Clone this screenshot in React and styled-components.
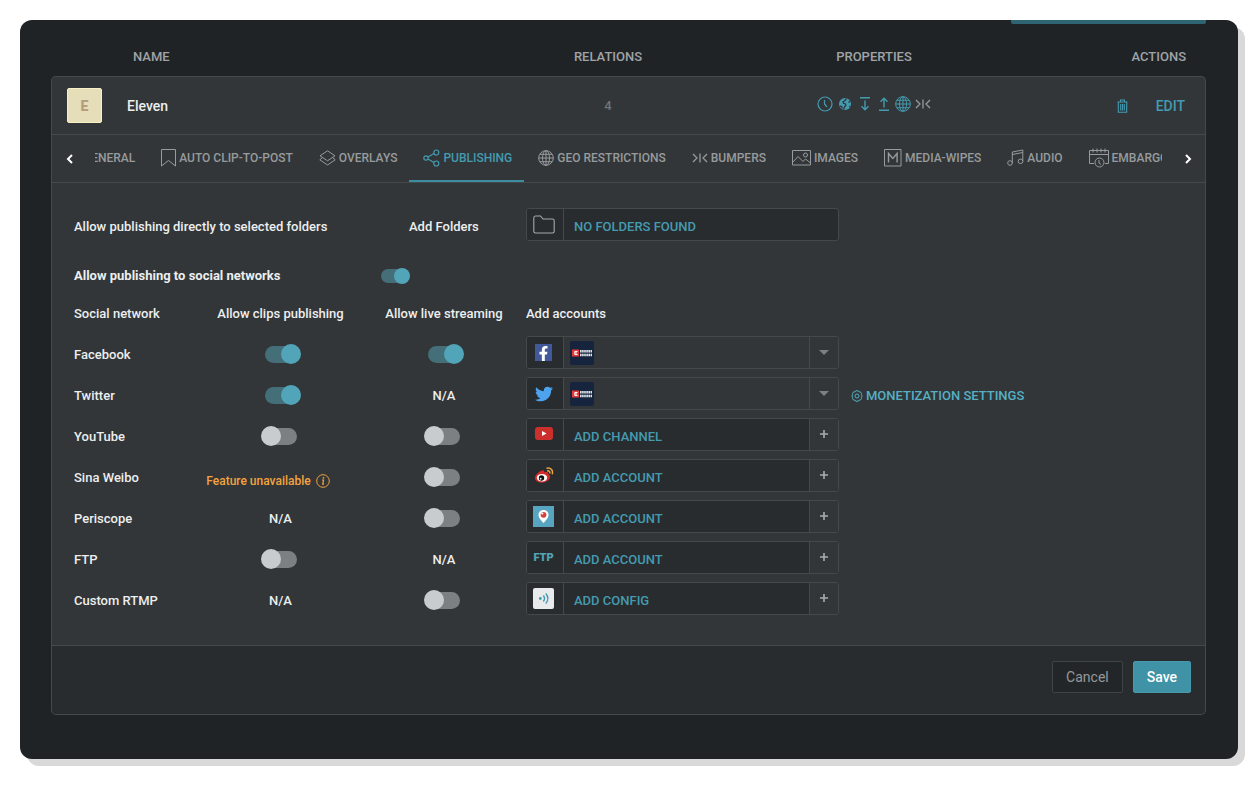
import { useState } from "react";
import styled, { createGlobalStyle } from "styled-components";
import { FaTwitter, FaFacebookF } from "react-icons/fa";

const GlobalStyle = createGlobalStyle`
	* {
		box-sizing: border-box;
	}
	body {
		margin: 0;
		background-color: #fff;
		color: #eceeef;
		font-family: Roboto, "Liberation Sans", sans-serif;
		font-size: 13px;
		font-weight: 500;
		line-height: 16px;
	}
	button {
		font: inherit;
		color: inherit;
		background: none;
		border: none;
		padding: 0;
		cursor: pointer;
	}
	svg {
		display: block;
		flex-shrink: 0;
	}
`;

const Window = styled.main`
	margin: 20px 22px 20px 20px;
	padding: 0 32px 44px 31px;
	background-color: #1f2326;
	border-radius: 12px;
	box-shadow: 7px 7px 0 #d9d9d9;
`;

const TopStrip = styled.div`
	width: 195px;
	height: 4px;
	margin-left: auto;
	background-color: #2f6472;
	border-radius: 0 0 2px 2px;
`;

const ChannelTable = styled.table`
	display: block;

	thead,
	tbody {
		display: block;
	}
	tr {
		display: grid;
		grid-template-columns: 424fr 266fr 266fr 199fr;
		align-items: center;
	}
	th,
	td {
		padding: 0;
		text-align: center;
	}
	th {
		color: #a0a4a6;
		font-weight: 500;
	}
	th:first-child {
		padding-left: 82px;
		text-align: left;
	}
	th:last-child {
		padding-right: 20px;
		text-align: right;
	}
`;

const HeadRow = styled.tr`
	height: 52px;
	padding-top: 14px;
`;

const ChannelRow = styled.tr`
	height: 58px;
	background-color: #323638;
	border: 1px solid #46494c;
	border-bottom: none;
	border-radius: 5px 5px 0 0;
`;

const Name = styled.div`
	display: flex;
	align-items: center;
	gap: 25px;
	padding-left: 15px;
	font-size: 14px;
`;

const Avatar = styled.span`
	display: flex;
	align-items: center;
	justify-content: center;
	width: 35px;
	height: 35px;
	background-color: #e6deb8;
	border: 1px solid #f6f0c4;
	border-radius: 2px;
	color: #b79d80;
	font-size: 14px;
	font-weight: 900;
`;

const Count = styled.span`
	color: #6f7476;
`;

const Muted = styled.span`
	color: #979b9d;
`;

const Properties = styled.div`
	display: flex;
	justify-content: center;
	align-items: center;
	gap: 4px;
	padding-bottom: 4px;
	color: #449bb0;
`;

const Actions = styled.div`
	display: flex;
	justify-content: flex-end;
	align-items: center;
	gap: 28px;
	padding-right: 20px;
	color: #449bb0;
	font-size: 14px;
`;

const Panel = styled.section`
	background-color: #323638;
	border: 1px solid #46494c;
	border-top: none;
	border-radius: 0 0 5px 5px;
	overflow: hidden;
`;

const TabBar = styled.nav`
	display: flex;
	height: 49px;
	border-top: 1px solid #46494c;
	border-bottom: 1px solid #46494c;
`;

const ArrowButton = styled.button`
	display: flex;
	align-items: center;
	justify-content: center;
	width: ${(props) => (props.$next ? "43px" : "35px")};
	margin-right: ${(props) => (props.$next ? "0" : "8px")};
	padding-left: ${(props) => (props.$next ? "8px" : "0")};
	color: #fff;
`;

const TabScroller = styled.div`
	display: flex;
	flex: 1;
	min-width: 0;
	overflow: hidden;
`;

const TabList = styled.div`
	display: flex;
	margin-left: ${(props) => -props.$offset}px;
`;

const Tab = styled.button`
	display: flex;
	align-items: center;
	gap: 3px;
	padding: 0 12px 0 14px;
	border-bottom: 2px solid ${(props) => (props.$active ? "#3b8d9f" : "transparent")};
	color: ${(props) => (props.$active ? "#449bb0" : "#979b9d")};
	font-size: 12px;
	white-space: nowrap;
`;

const Content = styled.div`
	padding: 25px 22px 24px;
`;

const FolderRow = styled.div`
	display: grid;
	grid-template-columns: 335px 117px 312px;
	align-items: center;
	margin-bottom: 14px;
`;

const SettingRow = styled.div`
	display: grid;
	grid-template-columns: 307px 1fr;
	align-items: center;
	height: 34px;
	font-weight: 700;
`;

const NetworkTable = styled.table`
	width: 100%;
	table-layout: fixed;
	border-collapse: collapse;

	tr {
		height: 41px;
	}
	th,
	td {
		padding: 0;
		text-align: center;
		font-weight: 500;
	}
	th:first-child,
	th:last-child {
		text-align: left;
	}
`;

const Col = styled.col`
	width: ${(props) => props.$width};
`;

const AccountCell = styled.div`
	display: flex;
	align-items: center;
	gap: 12px;
`;

const Field = styled.div`
	display: flex;
	width: 313px;
	height: 33px;
	margin-bottom: 4px;
	background-color: ${(props) => (props.$filled ? "#323638" : "#292c2e")};
	border: 1px solid #45494b;
	border-radius: 3px;
`;

const FieldIcon = styled.span`
	display: flex;
	align-items: center;
	justify-content: center;
	width: 37px;
	padding-right: 3px;
	background-color: #292c2e;
	border-right: 1px solid #45494b;
	border-radius: 2px 0 0 2px;
`;

const FieldBody = styled.div`
	display: flex;
	flex: 1;
	align-items: center;
	padding-left: 5px;
`;

const FieldLink = styled.button`
	padding: 4px 0 0 5px;
	color: #449bb0;
`;

const FieldButton = styled.button`
	display: flex;
	align-items: center;
	justify-content: center;
	width: 29px;
	background-color: #323638;
	border-left: 1px solid #45494b;
	border-radius: 0 2px 2px 0;
	color: #a9adaf;
`;

const LinkButton = styled.button`
	display: flex;
	align-items: center;
	gap: 3px;
	color: #55b0c5;
`;

const Warning = styled.span`
	display: inline-flex;
	align-items: center;
	gap: 5px;
	padding-top: 6px;
	margin-right: 25px;
	color: #f2a33f;
	font-size: 12px;
	white-space: nowrap;
`;

const Switch = styled.input`
	appearance: none;
	display: inline-block;
	position: relative;
	width: ${(props) => (props.$small ? "26px" : "32px")};
	height: ${(props) => (props.$small ? "14px" : "17px")};
	margin: 0;
	vertical-align: middle;
	background-color: #7c8082;
	border-radius: 9px;
	cursor: pointer;

	&::before {
		content: "";
		position: absolute;
		top: ${(props) => (props.$small ? "-1px" : "-2px")};
		left: -4px;
		width: ${(props) => (props.$small ? "16px" : "20px")};
		height: ${(props) => (props.$small ? "16px" : "20px")};
		background-color: #c9cccf;
		border-radius: 50%;
	}
	&:checked {
		background-color: #446e78;
	}
	&:checked::before {
		left: ${(props) => (props.$small ? "13px" : "16px")};
		background-color: #52a5b8;
	}
`;

const Footer = styled.footer`
	display: flex;
	justify-content: flex-end;
	gap: 10px;
	padding: 15px 14px 21px;
	background-color: #292c2e;
	border-top: 1px solid #46494c;
`;

const FooterButton = styled.button`
	height: 32px;
	padding: 0 13px;
	border: 1px solid ${(props) => (props.$primary ? "#4798ab" : "#404446")};
	border-radius: 2px;
	background-color: ${(props) => (props.$primary ? "#4092a6" : "#232628")};
	color: ${(props) => (props.$primary ? "#fff" : "#95999b")};
	font-size: 14px;
	font-weight: ${(props) => (props.$primary ? 500 : 400)};
`;

const Icon = ({ w, h, children, stroke = 1 }) => (
	<svg
		width={w}
		height={h}
		viewBox={`0 0 ${w} ${h}`}
		fill="none"
		stroke="currentColor"
		strokeWidth={stroke}
		aria-hidden="true"
	>
		{children}
	</svg>
);

const BookmarkIcon = () => (
	<Icon w={15} h={18}>
		<path d="M.5.5h14v16.500L7.500 11.500.5 17z" />
	</Icon>
);

const LayersIcon = () => (
	<Icon w={17} h={16}>
		<path d="M8.500.8 16 5.800 8.500 10.800 1 5.800zM3 8 .8 9.800 8.500 15 16.200 9.800 14 8" />
	</Icon>
);

const ShareIcon = () => (
	<Icon w={17} h={18} stroke={1.2}>
		<circle cx="3" cy="9" r="2.200" />
		<circle cx="13.300" cy="3.500" r="2.500" />
		<circle cx="13.300" cy="14.500" r="2.500" />
		<path d="M5 8l6-3.400M5 10l6 3.400" />
	</Icon>
);

const GlobeIcon = () => (
	<Icon w={16} h={16}>
		<circle cx="8" cy="8" r="7.300" />
		<ellipse cx="8" cy="8" rx="3.500" ry="7.300" />
		<path d="M8 .7v14.600M.7 8h14.600M2 4.300h12M2 11.700h12" />
	</Icon>
);

const BumperIcon = () => (
	<Icon w={16} h={12} stroke={1.3}>
		<path d="M1 2l4 4-4 4M8 1.500v9M15 2l-4 4 4 4" />
	</Icon>
);

const ImageIcon = () => (
	<Icon w={19} h={16}>
		<path d="M.5.5h18v14.500H.5zM1 12l5-5.500 5 5 2.500-2.500 5 4" />
		<circle cx="13.500" cy="5" r="2" />
	</Icon>
);

const WipeIcon = () => (
	<Icon w={18} h={18}>
		<path d="M.5.5h16.500v16.500H.5z" />
		<path d="M4.500 13.500v-9l4.300 5 4.300-5v9" strokeWidth="1.400" />
	</Icon>
);

const MusicIcon = () => (
	<Icon w={17} h={17}>
		<circle cx="3" cy="14" r="2.300" />
		<circle cx="13.500" cy="12.300" r="2.300" />
		<path d="M5.300 14V3l10.500-2v11.300M5.300 5.500l10.500-2" />
	</Icon>
);

const EmbargoIcon = () => (
	<Icon w={20} h={20}>
		<path d="M5 15.500H.5v-13h19v13H16M.5 6.500h19M4 .5v4M8 .5v4M12 .5v4M16 .5v4" />
		<circle cx="10.500" cy="14.500" r="4.500" />
		<path d="M10 12v3l2 1.500" />
	</Icon>
);

const ClockIcon = () => (
	<Icon w={16} h={16} stroke={1.2}>
		<circle cx="8" cy="8" r="7" />
		<path d="M7.500 4v4l2.500 3" />
	</Icon>
);

const EarthIcon = () => (
	<Icon w={16} h={16}>
		<circle cx="8" cy="8" r="6" fill="currentColor" stroke="none" />
		<path
			d="M9.500 2.500 7.500 5l-1.500.8.5 1.500 2 .7.3 1.500-1.300 1.300-.8 2.700M3 9.800l2 1-.2 1.800M11.500 6.500l1.500-1.200M12 10l1 .5"
			stroke="#323638"
			strokeWidth="1.300"
		/>
	</Icon>
);

const DownIcon = () => (
	<Icon w={15} h={16} stroke={1.4}>
		<path d="M3 1.700h10M8 4.500v9M4.500 10.300 8 13.800l3.500-3.500" />
	</Icon>
);

const UpIcon = () => (
	<Icon w={15} h={16} stroke={1.4}>
		<path d="M3 14.300h10M8 11.500v-9M4.500 5.700 8 2.200l3.500 3.500" />
	</Icon>
);

const TrashIcon = () => (
	<Icon w={11} h={14} stroke={1.1}>
		<path d="M.5 3h10M3.500 2.800V1h4v1.800M1.300 3.200v10h8.400v-10M3.700 5v6.500M5.500 5v6.500M7.300 5v6.500" />
	</Icon>
);

const FolderIcon = () => (
	<Icon w={22} h={19} stroke={1.1}>
		<path
			d="M.8 3C.8 1.500 1.300 1 2.500 1h5L10 4h9.500c1.200 0 1.700.5 1.700 1.700v10.600c0 1.200-.5 1.700-1.700 1.700h-17C1.300 18 .8 17.500 .8 16.300z"
			stroke="#a5a9ab"
		/>
	</Icon>
);

const ChevronIcon = ({ next }) => (
	<Icon w={8} h={10} stroke={2}>
		<path d={next ? "M2 1l4 4-4 4" : "M6 1 2 5l4 4"} />
	</Icon>
);

const CaretIcon = () => (
	<Icon w={10} h={5}>
		<path d="M0 0h10L5 5z" fill="#7c8082" stroke="none" />
	</Icon>
);

const PlusIcon = () => (
	<Icon w={8} h={10} stroke={1.6}>
		<path d="M4 0v8M0 4h8" />
	</Icon>
);

const GearIcon = () => (
	<Icon w={12} h={12}>
		<path d="M4.700.8h2.600l.5 1 1.700.1 1 1.800-.1 1.100.8 1.200-.8 1.200.1 1.300-1 1.500-1.700.2-.5 1H4.700l-.5-1-1.700-.2-1-1.500.1-1.300L.8 6l.8-1.200-.1-1.100 1-1.800 1.700-.1z" />
		<circle cx="6" cy="6" r="2" />
	</Icon>
);

const InfoIcon = () => (
	<Icon w={14} h={14}>
		<circle cx="7" cy="7" r="6.300" />
		<path d="M6 6h1.500l-.8 4.200H8" strokeWidth="1.200" />
		<circle cx="7.500" cy="3.800" r=".9" fill="currentColor" stroke="none" />
	</Icon>
);

const FacebookLogo = styled.span`
	display: flex;
	align-items: flex-end;
	justify-content: flex-end;
	width: 17px;
	height: 17px;
	padding-right: 1px;
	background-color: #41599b;
	color: #fff;
	font-size: 15px;
`;

const TwitterLogo = styled(FaTwitter)`
	color: #4da3ee;
	font-size: 18px;
`;

const YoutubeLogo = () => (
	<Icon w={18} h={15}>
		<rect width="18" height="13" rx="3" fill="#cb302c" stroke="none" />
		<path d="M7 4v5l4.500-2.500z" fill="#fff" stroke="none" />
	</Icon>
);

const WeiboLogo = () => (
	<Icon w={20} h={17}>
		<path
			d="M8 3.500c1.700-.8 2.700.2 2.200 2 2-.9 4.300-.6 4 1.600 1.800.7 2.300 2 1.800 3.600-.8 2.800-4.500 4.900-8.500 4.900C3.700 15.600 1 13.600 1 11c0-2.800 3.500-6.200 7-7.500z"
			fill="#da2a2a"
			stroke="none"
		/>
		<ellipse cx="8" cy="10.700" rx="5.200" ry="3.800" fill="#fff" stroke="none" />
		<circle cx="7.500" cy="11" r="2.700" fill="#111" stroke="none" />
		<circle cx="6.700" cy="11.700" r=".9" fill="#fff" stroke="none" />
		<path d="M12.500 1.200c4-1.200 7 2 5.700 6M13 4c2-.6 3.200.7 2.700 2.500" stroke="#eba13d" strokeWidth="1.500" />
	</Icon>
);

const PeriscopeLogo = () => (
	<Icon w={21} h={21}>
		<rect width="21" height="21" fill="#57a5c1" stroke="none" />
		<path
			d="M10.500 4c3 0 5 2.200 5 4.800 0 3-3 6.200-5 8.200-2-2-5-5.200-5-8.200C5.500 6.200 7.500 4 10.500 4z"
			fill="#fff"
			stroke="none"
		/>
		<circle cx="10.500" cy="8.800" r="2.900" fill="#d8403a" stroke="none" />
		<circle cx="9.300" cy="7.500" r="1.100" fill="#fff" stroke="none" />
	</Icon>
);

const FtpLogo = styled.span`
	color: #52a5b8;
	font-size: 11px;
	font-weight: 900;
`;

const RtmpLogo = () => (
	<Icon w={21} h={21}>
		<rect width="21" height="21" rx="2" fill="#e8eaeb" stroke="none" />
		<circle cx="7.300" cy="10.500" r="1.400" fill="#449bb0" stroke="none" />
		<path d="M10.300 7.500c1.500 1.800 1.500 4.200 0 6M12.800 5.500c2.500 3 2.500 7 0 10" stroke="#449bb0" strokeWidth="1.400" />
	</Icon>
);

const ElevenBadge = () => (
	<svg width="26" height="24" viewBox="0 0 26 24" role="img" aria-label="Eleven Sports">
		<rect x="1" width="24" height="24" rx="2" fill="#16243d" />
		<rect x="3" y="8.500" width="7" height="7" fill="#e23b3b" />
		<path d="M8.500 10.500H5.800v3h2.700M6 12h2" stroke="#fff" fill="none" />
		<path d="M11 10.300h12M11 14h12" stroke="#dfe4ea" strokeWidth="2.400" strokeDasharray="1.600 .5" />
	</svg>
);

const tabs = [
	{ label: "GENERAL" },
	{ label: "AUTO CLIP-TO-POST", icon: <BookmarkIcon /> },
	{ label: "OVERLAYS", icon: <LayersIcon /> },
	{ label: "PUBLISHING", icon: <ShareIcon /> },
	{ label: "GEO RESTRICTIONS", icon: <GlobeIcon /> },
	{ label: "BUMPERS", icon: <BumperIcon /> },
	{ label: "IMAGES", icon: <ImageIcon /> },
	{ label: "MEDIA-WIPES", icon: <WipeIcon /> },
	{ label: "AUDIO", icon: <MusicIcon /> },
	{ label: "EMBARGO", icon: <EmbargoIcon /> },
];

const networks = [
	{
		name: "Facebook",
		clips: true,
		live: true,
		logo: (
			<FacebookLogo>
				<FaFacebookF />
			</FacebookLogo>
		),
	},
	{ name: "Twitter", clips: true, live: "N/A", logo: <TwitterLogo />, monetization: true },
	{ name: "YouTube", clips: false, live: false, logo: <YoutubeLogo />, add: "ADD CHANNEL" },
	{ name: "Sina Weibo", clips: "unavailable", live: false, logo: <WeiboLogo />, add: "ADD ACCOUNT" },
	{ name: "Periscope", clips: "N/A", live: false, logo: <PeriscopeLogo />, add: "ADD ACCOUNT" },
	{ name: "FTP", clips: false, live: "N/A", logo: <FtpLogo>FTP</FtpLogo>, add: "ADD ACCOUNT" },
	{ name: "Custom RTMP", clips: "N/A", live: false, logo: <RtmpLogo />, add: "ADD CONFIG" },
];

const Permission = ({ value, label }) => {
	if (value === "unavailable") {
		return (
			<Warning>
				Feature unavailable <InfoIcon />
			</Warning>
		);
	}
	if (typeof value === "string") {
		return value;
	}
	return <Switch type="checkbox" role="switch" defaultChecked={value} aria-label={label} />;
};

const NetworkRow = ({ network }) => {
	const { name, clips, live, logo, add, monetization } = network;
	return (
		<tr>
			<th scope="row">{name}</th>
			<td>
				<Permission value={clips} label={`${name} clips publishing`} />
			</td>
			<td>
				<Permission value={live} label={`${name} live streaming`} />
			</td>
			<td>
				<AccountCell>
					<Field $filled={!add}>
						<FieldIcon>{logo}</FieldIcon>
						<FieldBody>
							{add ? <FieldLink type="button">{add}</FieldLink> : <ElevenBadge />}
						</FieldBody>
						<FieldButton type="button" aria-label={`${name} accounts`}>
							{add ? <PlusIcon /> : <CaretIcon />}
						</FieldButton>
					</Field>
					{monetization && (
						<LinkButton type="button">
							<GearIcon />
							MONETIZATION SETTINGS
						</LinkButton>
					)}
				</AccountCell>
			</td>
		</tr>
	);
};

const App = () => {
	const [active, setActive] = useState("PUBLISHING");
	const [offset, setOffset] = useState(26);

	return (
		<>
			<GlobalStyle />
			<Window>
				<TopStrip />
				<ChannelTable>
					<thead>
						<HeadRow>
							<th scope="col">NAME</th>
							<th scope="col">RELATIONS</th>
							<th scope="col">PROPERTIES</th>
							<th scope="col">ACTIONS</th>
						</HeadRow>
					</thead>
					<tbody>
						<ChannelRow>
							<td>
								<Name>
									<Avatar aria-hidden="true">E</Avatar>
									Eleven
								</Name>
							</td>
							<td>
								<Count>4</Count>
							</td>
							<td>
								<Properties>
									<ClockIcon />
									<EarthIcon />
									<DownIcon />
									<UpIcon />
									<GlobeIcon />
									<Muted>
										<BumperIcon />
									</Muted>
								</Properties>
							</td>
							<td>
								<Actions>
									<button type="button" aria-label="Delete">
										<TrashIcon />
									</button>
									<button type="button">EDIT</button>
								</Actions>
							</td>
						</ChannelRow>
					</tbody>
				</ChannelTable>
				<Panel>
					<TabBar>
						<ArrowButton type="button" aria-label="Previous tabs" onClick={() => setOffset(0)}>
							<ChevronIcon />
						</ArrowButton>
						<TabScroller>
							<TabList $offset={offset}>
								{tabs.map(({ label, icon }) => (
									<Tab
										key={label}
										type="button"
										$active={label === active}
										onClick={() => setActive(label)}
									>
										{icon}
										{label}
									</Tab>
								))}
							</TabList>
						</TabScroller>
						<ArrowButton type="button" $next aria-label="Next tabs" onClick={() => setOffset(52)}>
							<ChevronIcon next />
						</ArrowButton>
					</TabBar>
					<Content>
						<FolderRow>
							<span>Allow publishing directly to selected folders</span>
							<span>Add Folders</span>
							<Field>
								<FieldIcon>
									<FolderIcon />
								</FieldIcon>
								<FieldBody>
									<FieldLink type="button">NO FOLDERS FOUND</FieldLink>
								</FieldBody>
							</Field>
						</FolderRow>
						<SettingRow>
							<label htmlFor="social">Allow publishing to social networks</label>
							<Switch id="social" type="checkbox" role="switch" $small defaultChecked />
						</SettingRow>
						<NetworkTable>
							<colgroup>
								<Col $width="125px" />
								<Col $width="163px" />
								<Col $width="164px" />
								<Col />
							</colgroup>
							<thead>
								<tr>
									<th scope="col">Social network</th>
									<th scope="col">Allow clips publishing</th>
									<th scope="col">Allow live streaming</th>
									<th scope="col">Add accounts</th>
								</tr>
							</thead>
							<tbody>
								{networks.map((network) => (
									<NetworkRow key={network.name} network={network} />
								))}
							</tbody>
						</NetworkTable>
					</Content>
					<Footer>
						<FooterButton type="button">Cancel</FooterButton>
						<FooterButton type="button" $primary>
							Save
						</FooterButton>
					</Footer>
				</Panel>
			</Window>
		</>
	);
};

export default App;
